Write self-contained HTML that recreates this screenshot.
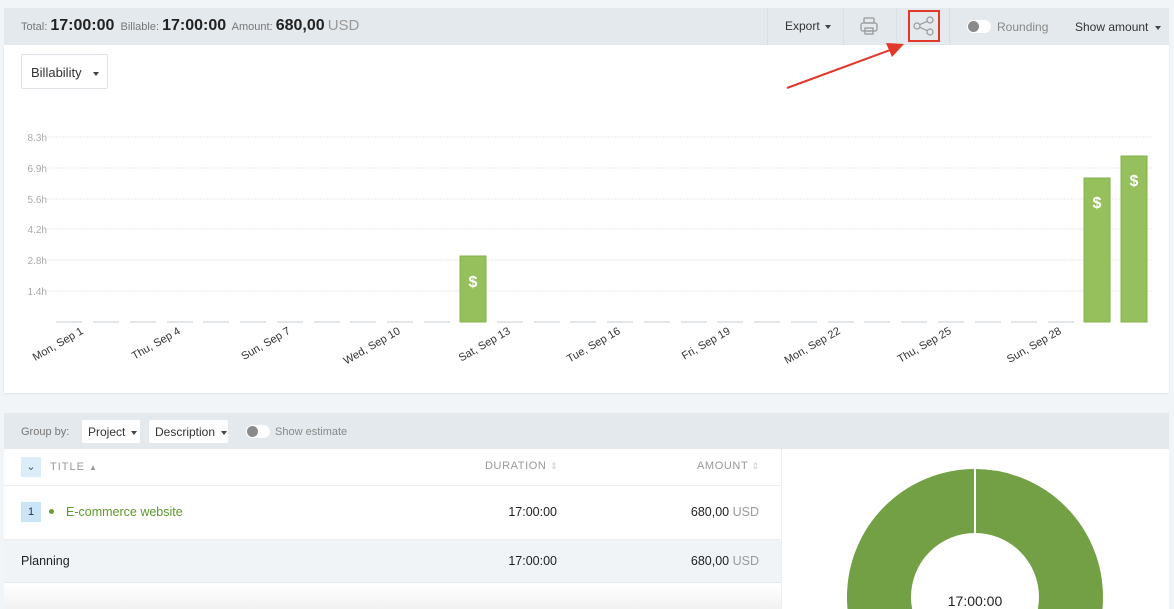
<!DOCTYPE html>
<html><head><meta charset="utf-8"><style>
*{margin:0;padding:0;box-sizing:border-box}
html,body{width:1174px;height:609px;overflow:hidden}
body{background:#f2f5f8;font-family:"Liberation Sans",Arial,sans-serif;position:relative;color:#333}
.a{position:absolute}
.sep{position:absolute;top:8px;height:37px;border-left:1px dotted #cfd6dc}
.btn{position:absolute;background:#fff;border:1px solid #dde3e8;border-radius:2px;font-size:12px;color:#333}
.caret{display:inline-block;width:0;height:0;border-left:3.5px solid transparent;border-right:3.5px solid transparent;border-top:4px solid #444;vertical-align:middle;margin-left:7px}
.tog{position:absolute;width:24px;height:13px;border-radius:7px;background:#fff}
.tog:after{content:"";position:absolute;left:1px;top:1px;width:11px;height:11px;border-radius:50%;background:#8a8a8a}
</style></head><body>
<div class="a" style="left:4px;top:8px;width:1165px;height:37px;background:#e4e9ed"></div>
<div class="a" style="left:21px;top:16px;font-size:11px;color:#777;white-space:nowrap;line-height:20px">Total: <b style="font-size:16px;color:#222">17:00:00</b>&nbsp; Billable: <b style="font-size:16px;color:#222">17:00:00</b>&nbsp; Amount: <b style="font-size:16px;color:#222">680,00</b> <span style="font-size:15px;color:#999">USD</span></div>
<div class="sep" style="left:767px"></div><div class="sep" style="left:843px"></div><div class="sep" style="left:896px"></div><div class="sep" style="left:949px"></div>
<div class="a" style="left:785px;top:19px;font-size:12px;color:#333">Export<span class="caret" style="margin-left:5px"></span></div>
<svg class="a" style="left:859px;top:16px" width="20" height="20" viewBox="0 0 20 20" fill="none" stroke="#999" stroke-width="1.3"><rect x="5" y="2" width="10" height="5" rx="1"/><rect x="2" y="7" width="16" height="8" rx="2"/><rect x="6" y="12" width="8" height="6"/><line x1="8" y1="15" x2="12" y2="15"/></svg>
<div class="a" style="left:908px;top:10px;width:32px;height:32px;border:2px solid #e0382a"></div>
<svg class="a" style="left:912px;top:15px" width="24" height="22" viewBox="0 0 24 22" fill="none" stroke="#999" stroke-width="1.2"><circle cx="18" cy="5" r="3"/><circle cx="18" cy="17" r="3"/><circle cx="5" cy="11" r="3"/><line x1="8" y1="9.5" x2="15.3" y2="6.3"/><line x1="8" y1="12.5" x2="15.3" y2="15.7"/></svg>
<div class="tog" style="left:967px;top:20px"></div>
<div class="a" style="left:997px;top:20px;font-size:12px;color:#888">Rounding</div>
<div class="a" style="left:1075px;top:20px;font-size:12px;color:#333">Show amount<span class="caret"></span></div>
<div class="a" style="left:4px;top:45px;width:1165px;height:348px;background:#fff;box-shadow:0 1px 2px #dde3e8"></div>
<div class="btn" style="left:21px;top:54px;width:87px;height:35px;padding:10px 0 0 9px;font-size:13px">Billability<span class="caret" style="margin-left:11px"></span></div>
<svg class="a" style="left:0;top:0" width="1174" height="400">
<g stroke="#e6e9ec" stroke-width="1" stroke-dasharray="2 1"><line x1="47" y1="137" x2="1152" y2="137"/><line x1="47" y1="168" x2="1152" y2="168"/><line x1="47" y1="199" x2="1152" y2="199"/><line x1="47" y1="229" x2="1152" y2="229"/><line x1="47" y1="260" x2="1152" y2="260"/><line x1="47" y1="291" x2="1152" y2="291"/></g>
<g font-size="10" fill="#aaa" text-anchor="end"><text x="47" y="141">8.3h</text><text x="47" y="172">6.9h</text><text x="47" y="203">5.6h</text><text x="47" y="233">4.2h</text><text x="47" y="264">2.8h</text><text x="47" y="295">1.4h</text></g>
<g stroke="#d9dde1" stroke-width="1.5">
<line x1="56" y1="322" x2="82" y2="322"/><line x1="93" y1="322" x2="119" y2="322"/><line x1="130" y1="322" x2="156" y2="322"/><line x1="167" y1="322" x2="193" y2="322"/><line x1="203" y1="322" x2="229" y2="322"/><line x1="240" y1="322" x2="266" y2="322"/><line x1="277" y1="322" x2="303" y2="322"/><line x1="314" y1="322" x2="340" y2="322"/><line x1="350" y1="322" x2="376" y2="322"/><line x1="387" y1="322" x2="413" y2="322"/><line x1="424" y1="322" x2="450" y2="322"/><line x1="497" y1="322" x2="523" y2="322"/><line x1="534" y1="322" x2="560" y2="322"/><line x1="570" y1="322" x2="596" y2="322"/><line x1="607" y1="322" x2="633" y2="322"/><line x1="644" y1="322" x2="670" y2="322"/><line x1="681" y1="322" x2="707" y2="322"/><line x1="717" y1="322" x2="743" y2="322"/><line x1="754" y1="322" x2="780" y2="322"/><line x1="791" y1="322" x2="817" y2="322"/><line x1="828" y1="322" x2="854" y2="322"/><line x1="864" y1="322" x2="890" y2="322"/><line x1="901" y1="322" x2="927" y2="322"/><line x1="938" y1="322" x2="964" y2="322"/><line x1="975" y1="322" x2="1001" y2="322"/><line x1="1011" y1="322" x2="1037" y2="322"/><line x1="1048" y1="322" x2="1074" y2="322"/></g>
<g fill="#96c05c" stroke="#86b04c"><rect x="460" y="256" width="26" height="66"/><rect x="1084" y="178" width="26" height="144"/><rect x="1121" y="156" width="26" height="166"/></g>
<g fill="#fff" font-size="16" font-weight="bold" text-anchor="middle"><text x="473" y="287">$</text><text x="1097" y="208">$</text><text x="1134" y="186">$</text></g>
<g font-size="11" fill="#333" text-anchor="end">
<text transform="translate(84,333) rotate(-30)">Mon, Sep 1</text><text transform="translate(181,333) rotate(-30)">Thu, Sep 4</text><text transform="translate(291,333) rotate(-30)">Sun, Sep 7</text><text transform="translate(401,333) rotate(-30)">Wed, Sep 10</text><text transform="translate(511,333) rotate(-30)">Sat, Sep 13</text><text transform="translate(621,333) rotate(-30)">Tue, Sep 16</text><text transform="translate(731,333) rotate(-30)">Fri, Sep 19</text><text transform="translate(841,333) rotate(-30)">Mon, Sep 22</text><text transform="translate(952,333) rotate(-30)">Thu, Sep 25</text><text transform="translate(1062,333) rotate(-30)">Sun, Sep 28</text></g>
<line x1="787" y1="88" x2="893" y2="49" stroke="#e0382a" stroke-width="2"/><polygon points="904,44 886,43 892,57" fill="#e0382a"/>
</svg>
<div class="a" style="left:4px;top:413px;width:1165px;height:36px;background:#e4e9ed"></div>
<div class="a" style="left:21px;top:426px;font-size:11px;color:#777">Group by:</div>
<div class="btn" style="left:82px;top:420px;width:58px;height:23px;padding:5px 0 0 6px;border:none">Project<span class="caret" style="margin-left:6px"></span></div>
<div class="btn" style="left:149px;top:420px;width:79px;height:23px;padding:5px 0 0 6px;border:none">Description<span class="caret" style="margin-left:6px"></span></div>
<div class="tog" style="left:246px;top:425px"></div>
<div class="a" style="left:275px;top:426px;font-size:11px;color:#888">Show estimate</div>
<div class="a" style="left:4px;top:449px;width:1165px;height:160px;background:#fff"></div>
<div class="a" style="left:4px;top:485px;width:777px;height:1px;background:#eceff2"></div>
<div class="a" style="left:21px;top:457px;width:20px;height:20px;background:#dcedfa;color:#2a5d8a;font-size:11px;text-align:center;line-height:20px">&#8964;</div>
<div class="a" style="left:50px;top:461px;font-size:11px;color:#999;letter-spacing:1px">TITLE <span style="font-size:8px">&#9650;&#xFE0E;</span></div>
<div class="a" style="left:485px;top:460px;font-size:11px;color:#999;letter-spacing:0.6px">DURATION <span style="color:#ccc;font-size:9px">&#8661;</span></div>
<div class="a" style="left:697px;top:460px;font-size:11px;color:#999;letter-spacing:0.6px">AMOUNT <span style="color:#ccc;font-size:9px">&#8661;</span></div>
<div class="a" style="left:21px;top:502px;width:20px;height:20px;background:#cbe5f8;font-size:11px;text-align:center;line-height:20px">1</div>
<div class="a" style="left:49px;top:509px;width:5px;height:5px;border-radius:50%;background:#6a9e3b"></div>
<div class="a" style="left:66px;top:505px;font-size:12.5px;color:#5c9a2b">E-commerce website</div>
<div class="a" style="left:480px;top:505px;width:77px;text-align:right;font-size:12.5px;color:#222">17:00:00</div>
<div class="a" style="left:650px;top:505px;width:109px;text-align:right;font-size:12.5px;color:#222">680,00 <span style="color:#999">USD</span></div>
<div class="a" style="left:4px;top:539px;width:777px;height:44px;background:#f1f4f7;border-top:1px solid #eceff2;border-bottom:1px solid #e6eaee"></div>
<div class="a" style="left:21px;top:554px;font-size:12.5px;color:#222">Planning</div>
<div class="a" style="left:480px;top:554px;width:77px;text-align:right;font-size:12.5px;color:#222">17:00:00</div>
<div class="a" style="left:650px;top:554px;width:109px;text-align:right;font-size:12.5px;color:#222">680,00 <span style="color:#999">USD</span></div>
<div class="a" style="left:4px;top:584px;width:777px;height:25px;background:linear-gradient(#fff,#f2f2f2)"></div>
<div class="a" style="left:781px;top:449px;width:1px;height:160px;background:#eceff2"></div>
<svg class="a" style="left:781px;top:449px;overflow:hidden" width="388" height="160">
<circle cx="194" cy="148" r="96" fill="none" stroke="#739f45" stroke-width="64"/>
<line x1="194" y1="18" x2="194" y2="86" stroke="#fff" stroke-width="2"/>
<text x="194" y="157" font-size="14" fill="#222" text-anchor="middle">17:00:00</text>
</svg>
</body></html>
